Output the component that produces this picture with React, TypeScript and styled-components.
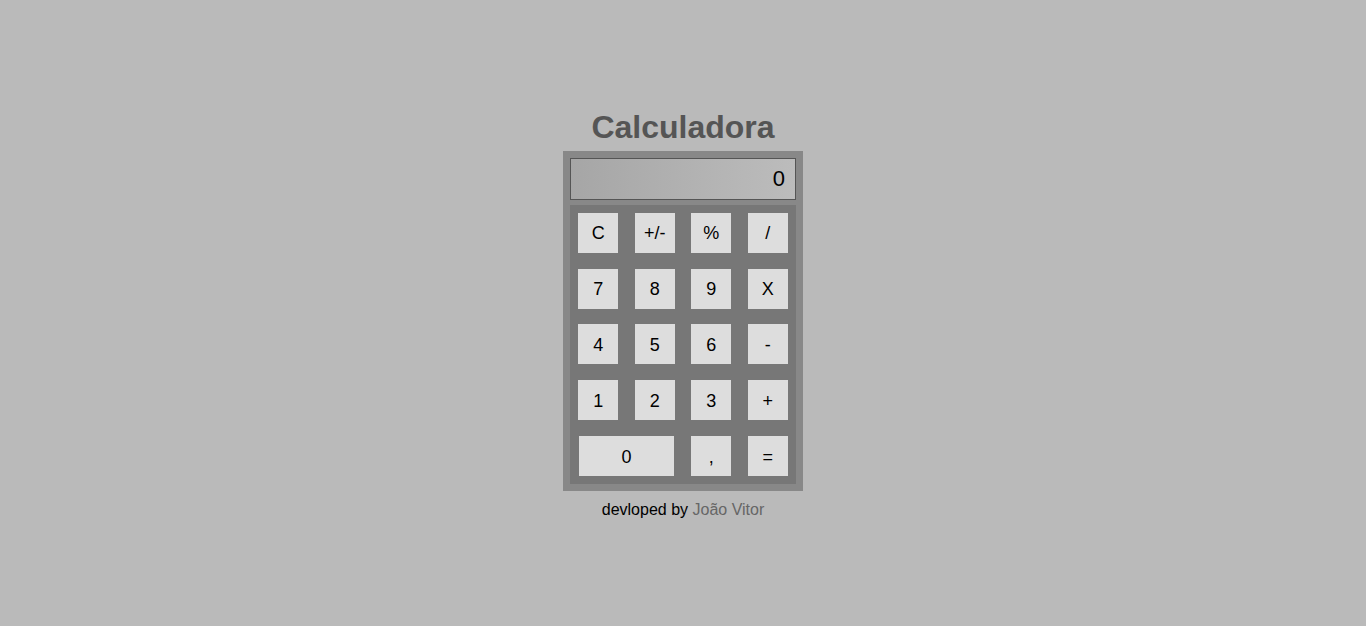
import React from "react";
import styled, { createGlobalStyle } from "styled-components";

const Global = createGlobalStyle`
  html, body { margin: 0; padding: 0; background: #bababa; }
  body { font-family: "Liberation Sans", Arial, sans-serif; }
`;

const Page = styled.main`
  min-height: 100vh;
  box-sizing: border-box;
  padding-top: 2px;
  display: flex;
  flex-direction: column;
  align-items: center;
  justify-content: center;
`;

const Title = styled.h1`
  margin: 0 0 6px;
  font-size: 32px;
  font-weight: bold;
  color: #555555;
  line-height: 36px;
`;

const Calculator = styled.div`
  width: 240px;
  box-sizing: border-box;
  background: #888888;
  padding: 7px;
  display: flex;
  flex-direction: column;
  gap: 5px;
`;

const Display = styled.div`
  height: 42px;
  box-sizing: border-box;
  border: 1px solid #555555;
  background: linear-gradient(to right, #a6a6a6, #bcbcbc);
  display: flex;
  align-items: center;
  justify-content: flex-end;
  padding-right: 10px;
  font-size: 22px;
  color: #000;
`;

const Keypad = styled.div`
  height: 279px;
  background: #777777;
  display: grid;
  grid-template-columns: repeat(4, 1fr);
  grid-template-rows: repeat(5, 1fr);
  align-items: center;
  justify-items: center;
`;

const Key = styled.button<{ $wide?: boolean }>`
  width: ${(p) => (p.$wide ? "95px" : "40px")};
  height: 40px;
  grid-column: ${(p) => (p.$wide ? "span 2" : "auto")};
  border: none;
  padding: 2px 0 0;
  background: #dddddd;
  color: #000;
  font-family: "Liberation Sans", Arial, sans-serif;
  font-size: 18px;
  cursor: pointer;
`;

const Footer = styled.p`
  margin: 10px 0 0;
  font-size: 16px;
  color: #000;
`;

const Author = styled.span`
  color: #666666;
`;

const keys: { label: string; wide?: boolean }[] = [
  { label: "C" }, { label: "+/-" }, { label: "%" }, { label: "/" },
  { label: "7" }, { label: "8" }, { label: "9" }, { label: "X" },
  { label: "4" }, { label: "5" }, { label: "6" }, { label: "-" },
  { label: "1" }, { label: "2" }, { label: "3" }, { label: "+" },
  { label: "0", wide: true }, { label: "," }, { label: "=" },
];

export default function App() {
  return (
    <>
      <Global />
      <Page>
        <Title>Calculadora</Title>
        <Calculator>
          <Display>0</Display>
          <Keypad>
            {keys.map((k) => (
              <Key key={k.label} $wide={k.wide}>
                {k.label}
              </Key>
            ))}
          </Keypad>
        </Calculator>
        <Footer>
          devloped by <Author>João Vitor</Author>
        </Footer>
      </Page>
    </>
  );
}
